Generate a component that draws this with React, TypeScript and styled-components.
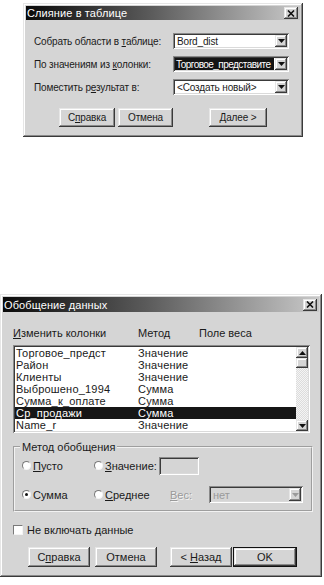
import React from "react";
import styled, { createGlobalStyle, css } from "styled-components";

const GlobalStyle = createGlobalStyle`
  body {
    margin: 0;
    background: #ffffff;
    font-family: "Liberation Sans", Arial, sans-serif;
    font-size: 11px;
    color: #1a1a1a;
  }
`;

const raised = css`
  box-shadow: inset -1px -1px #3a3a3a, inset 1px 1px #e6e6e6,
    inset -2px -2px #8a8a8a, inset 2px 2px #ffffff;
`;

const sunken = css`
  box-shadow: inset 1px 1px #8a8a8a, inset -1px -1px #ffffff,
    inset 2px 2px #3a3a3a, inset -2px -2px #dadada;
`;

const Page = styled.div`
  display: flex;
  flex-direction: column;
  width: 324px;
  height: 585px;
  overflow: hidden;
`;

const Win = styled.div<{ $width: number; $left: number; $top: number }>`
  width: ${(p) => p.$width}px;
  margin-left: ${(p) => p.$left}px;
  margin-top: ${(p) => p.$top}px;
  box-sizing: border-box;
  padding: 3px;
  background: #d5d5d5;
  display: flex;
  flex-direction: column;
  ${raised}
`;

const TitleBar = styled.div<{ $h: number }>`
  height: ${(p) => p.$h}px;
  display: flex;
  align-items: center;
  justify-content: space-between;
  padding: 0 2px 0 1px;
  background: linear-gradient(to right, #0a0a0a 0%, #5a5a5a 45%, #c8c8c8 100%);
  color: #ffffff;
  font-size: 11px;
  letter-spacing: 0.1px;
`;

const CloseBtn = styled.div`
  width: 14px;
  height: 12px;
  background: #d5d5d5;
  display: flex;
  align-items: center;
  justify-content: center;
  ${raised}
`;

const Body = styled.div<{ $pad: string; $compact?: boolean }>`
  padding: ${(p) => p.$pad};
  display: flex;
  flex-direction: column;
  ${(p) =>
    p.$compact &&
    css`
      font-size: 10px;
      letter-spacing: -0.15px;
    `}
`;

const FormRow = styled.div<{ $mt?: number }>`
  height: 16px;
  margin-top: ${(p) => p.$mt ?? 0}px;
  display: flex;
  align-items: center;
  justify-content: space-between;
  white-space: nowrap;
`;

const Combo = styled.div<{ $width: number; $height: number; $disabled?: boolean }>`
  width: ${(p) => p.$width}px;
  height: ${(p) => p.$height}px;
  flex: none;
  box-sizing: border-box;
  padding: 2px;
  display: flex;
  align-items: stretch;
  background: ${(p) => (p.$disabled ? "#d5d5d5" : "#ffffff")};
  color: ${(p) => (p.$disabled ? "#9a9a9a" : "#1a1a1a")};
  ${sunken}
`;

const ComboText = styled.div<{ $selected?: boolean }>`
  flex: 1;
  display: flex;
  align-items: center;
  padding-left: 2px;
  margin-right: 1px;
  white-space: nowrap;
  overflow: hidden;
  background: ${(p) => (p.$selected ? "#141414" : "transparent")};
  color: ${(p) => (p.$selected ? "#ffffff" : "inherit")};
  ${(p) =>
    p.$selected &&
    css`
      padding-left: 1px;
      letter-spacing: -0.55px;
    `}
`;

const ArrowBtn = styled.div<{ $w?: number; $h?: number }>`
  width: ${(p) => p.$w ?? 12}px;
  height: ${(p) => p.$h ?? 12}px;
  flex: none;
  background: #d5d5d5;
  display: flex;
  align-items: center;
  justify-content: center;
  ${raised}
`;

const ButtonRow = styled.div<{ $mt: number }>`
  display: flex;
  margin-top: ${(p) => p.$mt}px;
`;

const Button = styled.div<{ $width: number; $height: number; $ml: number; $default?: boolean }>`
  width: ${(p) => p.$width}px;
  height: ${(p) => p.$height}px;
  margin-left: ${(p) => p.$ml}px;
  box-sizing: border-box;
  display: flex;
  align-items: center;
  justify-content: center;
  background: #d5d5d5;
  ${raised}
  ${(p) =>
    p.$default &&
    css`
      border: 1px solid #111;
    `}
`;

const U = styled.span`
  text-decoration: underline;
`;

const Header = styled.div`
  display: flex;
  height: 12px;
  align-items: center;
`;

const Col = styled.div<{ $width: number }>`
  width: ${(p) => p.$width}px;
  flex: none;
  white-space: nowrap;
`;

const ListBox = styled.div`
  width: 297px;
  height: 88px;
  margin-top: 6px;
  box-sizing: border-box;
  padding: 2px;
  display: flex;
  background: #ffffff;
  ${sunken}
`;

const ListRows = styled.div`
  flex: 1;
  display: flex;
  flex-direction: column;
  letter-spacing: 0.2px;
`;

const ListRow = styled.div<{ $selected?: boolean }>`
  height: 12px;
  display: flex;
  align-items: center;
  padding-left: 1px;
  background: ${(p) => (p.$selected ? "#161616" : "transparent")};
  color: ${(p) => (p.$selected ? "#ffffff" : "#1a1a1a")};
`;

const ScrollBar = styled.div`
  width: 12px;
  display: flex;
  flex-direction: column;
  background-color: #ececec;
  background-image: repeating-conic-gradient(#f4f4f4 0 25%, #dcdcdc 0 50%);
  background-size: 2px 2px;
`;

const Thumb = styled.div`
  height: 10px;
  background: #d5d5d5;
  ${raised}
`;

const Track = styled.div`
  flex: 1;
`;

const Group = styled.fieldset`
  margin: 8px 0 0 0;
  width: 300px;
  box-sizing: border-box;
  padding: 3px 0 6px 7px;
  border: 2px groove #f2f2f2;
  display: flex;
  flex-direction: column;
  gap: 10px;
`;

const Legend = styled.legend`
  padding: 0 2px;
  margin-left: -2px;
  font-size: 11px;
`;

const GroupRow = styled.div`
  height: 19px;
  display: flex;
  align-items: center;
`;

const Option = styled.div<{ $width: number }>`
  width: ${(p) => p.$width}px;
  flex: none;
  display: flex;
  align-items: center;
  gap: 2px;
  white-space: nowrap;
`;

const Radio = styled.div<{ $checked?: boolean }>`
  width: 9px;
  height: 9px;
  box-sizing: border-box;
  border-radius: 50%;
  border: 1px solid;
  border-color: #7a7a7a #f4f4f4 #f4f4f4 #7a7a7a;
  background: #ffffff;
  display: flex;
  align-items: center;
  justify-content: center;
  &::after {
    content: "";
    width: 3px;
    height: 3px;
    border-radius: 50%;
    background: ${(p) => (p.$checked ? "#111" : "transparent")};
  }
`;

const DisabledLabel = styled.div<{ $width: number }>`
  width: ${(p) => p.$width}px;
  flex: none;
  color: #9a9a9a;
  text-shadow: 1px 1px #f4f4f4;
`;

const Field = styled.div`
  width: 40px;
  height: 18px;
  box-sizing: border-box;
  background: #d5d5d5;
  ${sunken}
`;

const CheckRow = styled.div`
  height: 13px;
  margin-top: 11px;
  display: flex;
  align-items: center;
  gap: 4px;
`;

const CheckBox = styled.div`
  width: 10px;
  height: 10px;
  box-sizing: border-box;
  background: #ffffff;
  border: 1px solid;
  border-color: #7a7a7a #f4f4f4 #f4f4f4 #7a7a7a;
`;

const CloseIcon = () => (
  <svg width="8" height="7" viewBox="0 0 8 7">
    <path d="M1 0.5 L7 6.5 M7 0.5 L1 6.5" stroke="#111" strokeWidth="1.6" />
  </svg>
);

const Tri = ({ up, color = "#111" }: { up?: boolean; color?: string }) => (
  <svg width="7" height="4" viewBox="0 0 7 4">
    <polygon points={up ? "3.5,0 7,4 0,4" : "0,0 7,0 3.5,4"} fill={color} />
  </svg>
);

const rows: [string, string, boolean?][] = [
  ["Торговое_предст", "Значение"],
  ["Район", "Значение"],
  ["Клиенты", "Значение"],
  ["Выброшено_1994", "Сумма"],
  ["Сумма_к_оплате", "Сумма"],
  ["Ср_продажи", "Сумма", true],
  ["Name_r", "Значение"],
];

export default function App() {
  return (
    <Page>
      <GlobalStyle />
      <Win $width={280} $left={23} $top={3}>
        <TitleBar $h={14}>
          <span>Слияние в таблице</span>
          <CloseBtn>
            <CloseIcon />
          </CloseBtn>
        </TitleBar>
        <Body $pad="13px 11px 7px 8px" $compact>
          <FormRow>
            <span>
              Собрать области в <U>т</U>аблице:
            </span>
            <Combo $width={116} $height={16}>
              <ComboText>Bord_dist</ComboText>
              <ArrowBtn>
                <Tri />
              </ArrowBtn>
            </Combo>
          </FormRow>
          <FormRow $mt={7}>
            <span>
              По значениям из <U>к</U>олонки:
            </span>
            <Combo $width={116} $height={16}>
              <ComboText $selected>Торговое_представите</ComboText>
              <ArrowBtn>
                <Tri />
              </ArrowBtn>
            </Combo>
          </FormRow>
          <FormRow $mt={7}>
            <span>
              Поместить р<U>е</U>зультат в:
            </span>
            <Combo $width={116} $height={16}>
              <ComboText>&lt;Создать новый&gt;</ComboText>
              <ArrowBtn>
                <Tri />
              </ArrowBtn>
            </Combo>
          </FormRow>
          <ButtonRow $mt={13}>
            <Button $width={56} $height={19} $ml={25}>
              <span>
                С<U>п</U>равка
              </span>
            </Button>
            <Button $width={55} $height={19} $ml={3}>
              Отмена
            </Button>
            <Button $width={58} $height={19} $ml={36}>
              <span>
                <U>Д</U>алее &gt;
              </span>
            </Button>
          </ButtonRow>
        </Body>
      </Win>

      <Win $width={322} $left={0} $top={157}>
        <TitleBar $h={15}>
          <span>Обобщение данных</span>
          <CloseBtn>
            <CloseIcon />
          </CloseBtn>
        </TitleBar>
        <Body $pad="15px 6px 7px 10px">
          <Header>
            <Col $width={125}>
              <U>И</U>зменить колонки
            </Col>
            <Col $width={61}>Метод</Col>
            <Col $width={80}>Поле веса</Col>
          </Header>
          <ListBox>
            <ListRows>
              {rows.map(([name, method, sel]) => (
                <ListRow key={name} $selected={sel}>
                  <Col $width={122}>{name}</Col>
                  <Col $width={80}>{method}</Col>
                </ListRow>
              ))}
            </ListRows>
            <ScrollBar>
              <ArrowBtn $w={12} $h={11}>
                <Tri up />
              </ArrowBtn>
              <Thumb />
              <Track />
              <ArrowBtn $w={12} $h={11}>
                <Tri />
              </ArrowBtn>
            </ScrollBar>
          </ListBox>
          <Group>
            <Legend>Метод обобщения</Legend>
            <GroupRow>
              <Option $width={72}>
                <Radio />
                <span>
                  <U>П</U>усто
                </span>
              </Option>
              <Option $width={65}>
                <Radio />
                <span>
                  <U>З</U>начение:
                </span>
              </Option>
              <Field />
            </GroupRow>
            <GroupRow>
              <Option $width={72}>
                <Radio $checked />
                <span>Сумма</span>
              </Option>
              <Option $width={76}>
                <Radio />
                <span>
                  <U>С</U>реднее
                </span>
              </Option>
              <DisabledLabel $width={39}>
                <U>В</U>ес:
              </DisabledLabel>
              <Combo $width={94} $height={17} $disabled>
                <ComboText>нет</ComboText>
                <ArrowBtn $h={13}>
                  <Tri color="#9a9a9a" />
                </ArrowBtn>
              </Combo>
            </GroupRow>
          </Group>
          <CheckRow>
            <CheckBox />
            <span>
              Не включать <U>д</U>анные
            </span>
          </CheckRow>
          <ButtonRow $mt={11}>
            <Button $width={62} $height={20} $ml={15}>
              <span>
                С<U>п</U>равка
              </span>
            </Button>
            <Button $width={62} $height={20} $ml={5}>
              Отмена
            </Button>
            <Button $width={62} $height={20} $ml={13}>
              <span>
                &lt; <U>Н</U>азад
              </span>
            </Button>
            <Button $width={64} $height={20} $ml={1} $default>
              OK
            </Button>
          </ButtonRow>
        </Body>
      </Win>
    </Page>
  );
}
